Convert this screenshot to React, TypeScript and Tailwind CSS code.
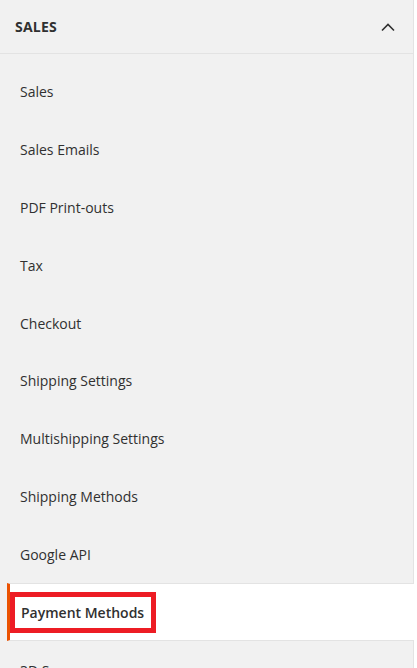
import React from 'react';

const items = [
  'Sales',
  'Sales Emails',
  'PDF Print-outs',
  'Tax',
  'Checkout',
  'Shipping Settings',
  'Multishipping Settings',
  'Shipping Methods',
  'Google API',
  'Payment Methods',
  '3D Secure',
];

const active = 'Payment Methods';

export default function App() {
  return (
    <div className="h-[668px] w-full overflow-hidden bg-white font-['Open_Sans',sans-serif] text-[#303030]">
      <div className="w-[414px] min-h-full bg-[#f1f1f1] border-r border-[#e3e3e3]">
        {/* Section header */}
        <div className="h-[54px] flex items-center justify-between pl-[15px] pr-[18px] border-b border-[#e3e3e3]">
          <span className="text-[14px] font-bold tracking-[0.2px] text-[#303030]">SALES</span>
          <svg width="14" height="9" viewBox="0 0 14 9" fill="none" className="mt-[1px]">
            <path d="M1 7.5 L7 1.5 L13 7.5" stroke="#303030" strokeWidth="1.6" />
          </svg>
        </div>

        {/* Items */}
        <ul className="pt-[9px]">
          {items.map((label) => {
            const isActive = label === active;
            if (isActive) {
              return (
                <li
                  key={label}
                  className="h-[58px] ml-[7px] mr-[-1px] flex items-center bg-white border-l-[3px] border-l-[#eb5202] border-y border-y-[#e3e3e3]"
                >
                  <span className="border-[5px] border-[#ed1c24] pl-[6px] pr-[7px] py-[6px] text-[14px] font-semibold leading-[19px] text-[#303030]">
                    {label}
                  </span>
                </li>
              );
            }
            return (
              <li key={label} className="h-[57.8px] flex items-center pl-[20px] text-[14px] leading-[19px]">
                {label}
              </li>
            );
          })}
        </ul>
      </div>
    </div>
  );
}
